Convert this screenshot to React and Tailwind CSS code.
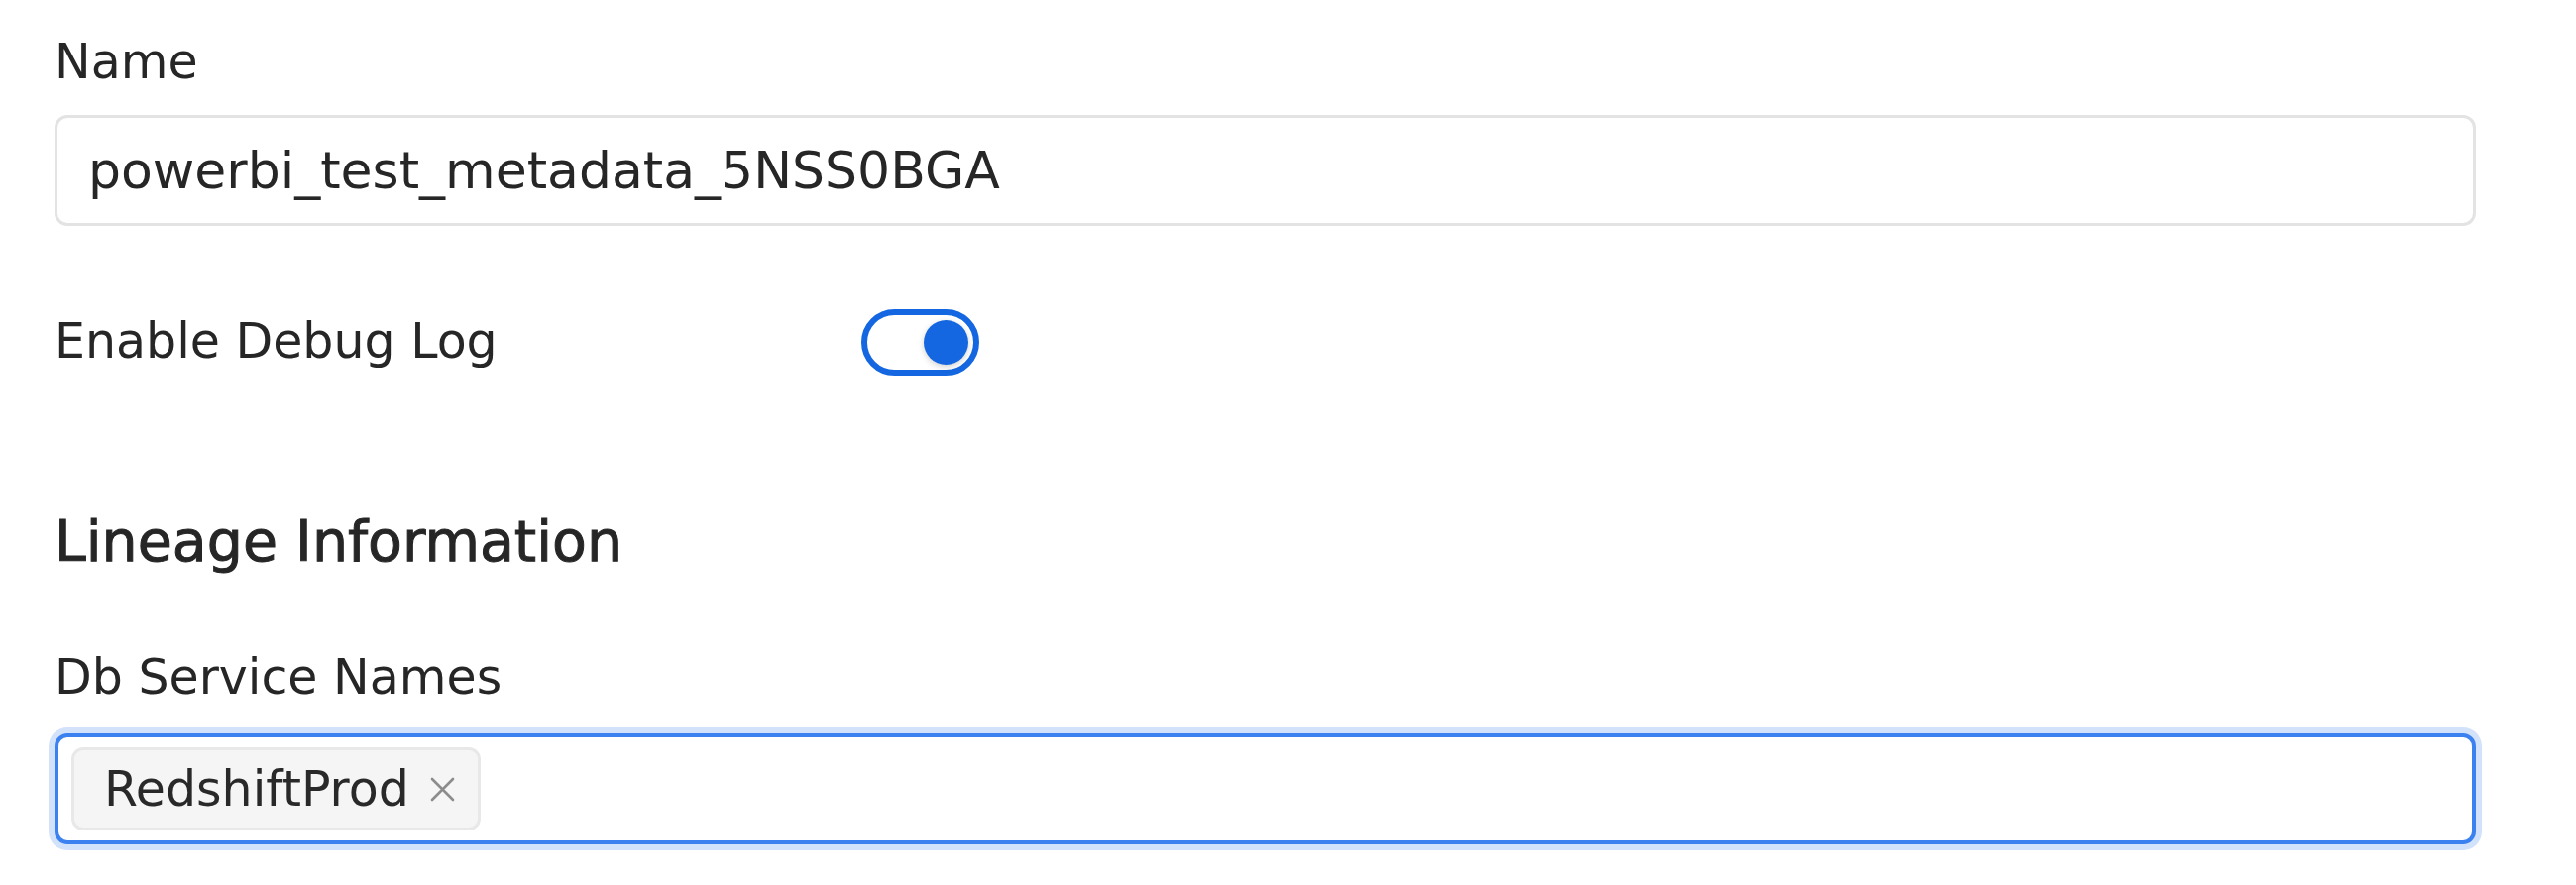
import { useState } from 'react'

function Toggle({ checked, onChange }) {
  return (
    <button
      type="button"
      onClick={() => onChange(!checked)}
      className={`flex items-center w-[119px] h-[67px] rounded-full border-[6px] border-[#1467e0] bg-white px-[5px] ${checked ? 'justify-end' : 'justify-start'}`}
    >
      <span className="block w-[45px] h-[45px] rounded-full bg-[#1467e0] shadow-[0_2px_6px_rgba(0,0,0,0.18)]" />
    </button>
  )
}

function Tag({ label, onRemove }) {
  return (
    <span className="flex items-center h-[84px] rounded-[12px] border-[3px] border-[#e8e8e8] bg-[#f5f5f5] pl-[30px] pr-[22px] gap-[20px]">
      <span className="text-[49px] leading-none text-[#292929]">{label}</span>
      <button type="button" onClick={onRemove} className="flex items-center">
        <svg width="27" height="27" viewBox="0 0 27 27" fill="none" stroke="#8c8c8c" strokeWidth="2.6" strokeLinecap="round">
          <path d="M3 3L24 24M24 3L3 24" />
        </svg>
      </button>
    </span>
  )
}

export default function App() {
  const [debug, setDebug] = useState(true)
  const [services, setServices] = useState(['RedshiftProd'])

  return (
    <div className="min-h-screen bg-white text-[#262626] font-['DejaVu_Sans',sans-serif]">
      <div className="pl-[55px] pr-[101px] pt-[27px]">
        <label className="block text-[49px] leading-[72px]">Name</label>
        <input
          readOnly
          value="powerbi_test_metadata_5NSS0BGA"
          className="mt-[17px] w-full h-[112px] rounded-[13px] border-[3px] border-[#e3e3e3] bg-white pl-[31px] text-[52px] text-[#262626] outline-none"
        />

        <div className="mt-[84px] flex items-center h-[66px]">
          <span className="w-[814px] text-[49px] leading-[72px]">Enable Debug Log</span>
          <Toggle checked={debug} onChange={setDebug} />
        </div>

        <h2 className="mt-[128px] text-[57px] font-medium leading-[80px] [-webkit-text-stroke:1px_#262626]">
          Lineage Information
        </h2>

        <label className="mt-[62px] block text-[49px] leading-[72px]">Db Service Names</label>
        <div className="mt-[20px] flex items-center gap-[12px] h-[112px] rounded-[13px] border-[4px] border-[#3b82f0] bg-white pl-[13px] shadow-[0_0_0_6px_#d3e2fb]">
          {services.map((s) => (
            <Tag key={s} label={s} onRemove={() => setServices(services.filter((x) => x !== s))} />
          ))}
        </div>
      </div>
    </div>
  )
}
